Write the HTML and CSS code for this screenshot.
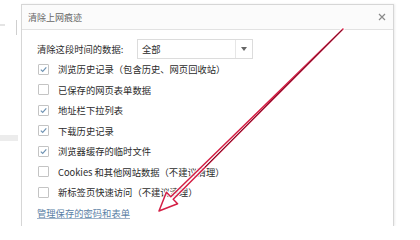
FILE: index.html
```html
<!DOCTYPE html>
<html lang="zh-CN">
<head>
<meta charset="utf-8">
<link rel="stylesheet" href="styles.css">
</head>
<body>
<div class="page">
  <div class="side">
    <span class="mark mark-a"></span>
    <span class="vline"></span>
    <span class="mark mark-b"></span>
  </div>
  <div class="dialog">
    <div class="titlebar">
      <span class="title">清除上网痕迹</span>
      <svg class="close" width="8" height="8" viewBox="0 0 8 8"><path d="M1 1L7 7M7 1L1 7" stroke="#8a8a8a" stroke-width="1.2"/></svg>
    </div>
    <div class="content">
      <div class="range-row">
        <span class="range-label">清除这段时间的数据:</span>
        <div class="select">
          <span class="select-value">全部</span>
          <span class="select-btn"><svg width="6" height="4" viewBox="0 0 6 4"><path d="M0 0H6L3 4Z" fill="#666"/></svg></span>
        </div>
      </div>
      <label class="check-row"><span class="box checked"><svg width="9" height="9" viewBox="0 0 9 9"><path d="M1.8 4.6L3.7 6.4L7.3 2.4" fill="none" stroke="#6f93b3" stroke-width="1.2"/></svg></span>浏览历史记录（包含历史、网页回收站）</label>
      <label class="check-row"><span class="box"></span>已保存的网页表单数据</label>
      <label class="check-row"><span class="box checked"><svg width="9" height="9" viewBox="0 0 9 9"><path d="M1.8 4.6L3.7 6.4L7.3 2.4" fill="none" stroke="#6f93b3" stroke-width="1.2"/></svg></span>地址栏下拉列表</label>
      <label class="check-row"><span class="box checked"><svg width="9" height="9" viewBox="0 0 9 9"><path d="M1.8 4.6L3.7 6.4L7.3 2.4" fill="none" stroke="#6f93b3" stroke-width="1.2"/></svg></span>下载历史记录</label>
      <label class="check-row"><span class="box checked"><svg width="9" height="9" viewBox="0 0 9 9"><path d="M1.8 4.6L3.7 6.4L7.3 2.4" fill="none" stroke="#6f93b3" stroke-width="1.2"/></svg></span>浏览器缓存的临时文件</label>
      <label class="check-row"><span class="box"></span>Cookies 和其他网站数据（不建议清理）</label>
      <label class="check-row"><span class="box"></span>新标签页快速访问（不建议清理）</label>
      <a class="link" href="#">管理保存的密码和表单</a>
    </div>
  </div>
  <svg class="arrow" width="420" height="226" viewBox="0 0 420 226">
    <polygon points="343,29 173.2,199.3 177.6,203.7 159,211 166.4,192.3 170.8,196.7" fill="none" stroke="#ffffff" stroke-width="3.6" stroke-linejoin="round" opacity="0.85"/>
    <polygon points="343,29 173.2,199.3 177.6,203.7 159,211 166.4,192.3 170.8,196.7" fill="none" stroke="#d41f45" stroke-width="1.5" stroke-linejoin="round"/>
    <line x1="342" y1="30" x2="205" y2="167" stroke="#4a1020" stroke-width="0.9" opacity="0.75"/>
  </svg>
</div>
</body>
</html>
```

FILE: styles.css
```css
html, body {
  margin: 0;
  padding: 0;
  background: #ffffff;
}

.page {
  position: relative;
  width: 420px;
  height: 226px;
  overflow: hidden;
  display: flex;
  font-family: "Noto Sans CJK SC", "Noto Sans", sans-serif;
  color: #2b2b2b;
}

.side {
  width: 21px;
  flex: none;
  display: flex;
  flex-direction: column;
  padding-top: 20px;
  box-sizing: border-box;
}

.mark {
  display: block;
  background: #e4e4e4;
}

.mark-a {
  width: 5px;
  height: 2px;
  margin-top: 4px;
}

.vline {
  display: block;
  width: 1px;
  height: 15px;
  margin-left: 16px;
  margin-top: -6px;
  background: #cfcfcf;
}

.mark-b {
  width: 18px;
  height: 6px;
  margin-top: 100px;
  background: #ececec;
}

.dialog {
  width: 373px;
  margin-top: 4px;
  border: 1px solid #d6d6d6;
  border-bottom: none;
  box-sizing: border-box;
  display: flex;
  flex-direction: column;
  background: #fff;
  box-shadow: 1px 0 2px rgba(0,0,0,0.08);
}

.titlebar {
  height: 24px;
  border-bottom: 1px solid #e2e2e2;
  display: flex;
  align-items: center;
  justify-content: space-between;
  padding: 0 7px 0 6px;
  background: #fbfbfb;
}

.title {
  font-size: 9px;
  color: #666;
}

.close {
  display: block;
}

.content {
  padding: 9px 0 0 15px;
  display: flex;
  flex-direction: column;
}

.range-row {
  height: 20px;
  display: flex;
  align-items: center;
  font-size: 9.3px;
}

.range-label {
  width: 100px;
  color: #2b2b2b;
}

.select {
  width: 116px;
  height: 20px;
  box-sizing: border-box;
  border: 1px solid #dcdcdc;
  display: flex;
  align-items: center;
}

.select-value {
  flex: 1;
  padding-left: 4px;
  font-size: 9.3px;
}

.select-btn {
  width: 16px;
  height: 100%;
  border-left: 1px solid #e6e6e6;
  display: flex;
  align-items: center;
  justify-content: center;
}

.check-row {
  height: 20.5px;
  display: flex;
  align-items: center;
  font-size: 9.3px;
  color: #2b2b2b;
  white-space: nowrap;
}

.box {
  width: 9px;
  height: 9px;
  border: 1px solid #c4c4c4;
  border-radius: 1px;
  margin: 0 9px 0 1px;
  display: flex;
  align-items: center;
  justify-content: center;
  background: #fff;
}

.box svg {
  display: block;
}

.link {
  height: 20px;
  display: flex;
  align-items: center;
  font-size: 9.3px;
  color: #5b7fa6;
  text-decoration: underline;
  text-decoration-color: #9fb3c9;
}

.arrow {
  position: absolute;
  left: 0;
  top: 0;
  pointer-events: none;
}
```
